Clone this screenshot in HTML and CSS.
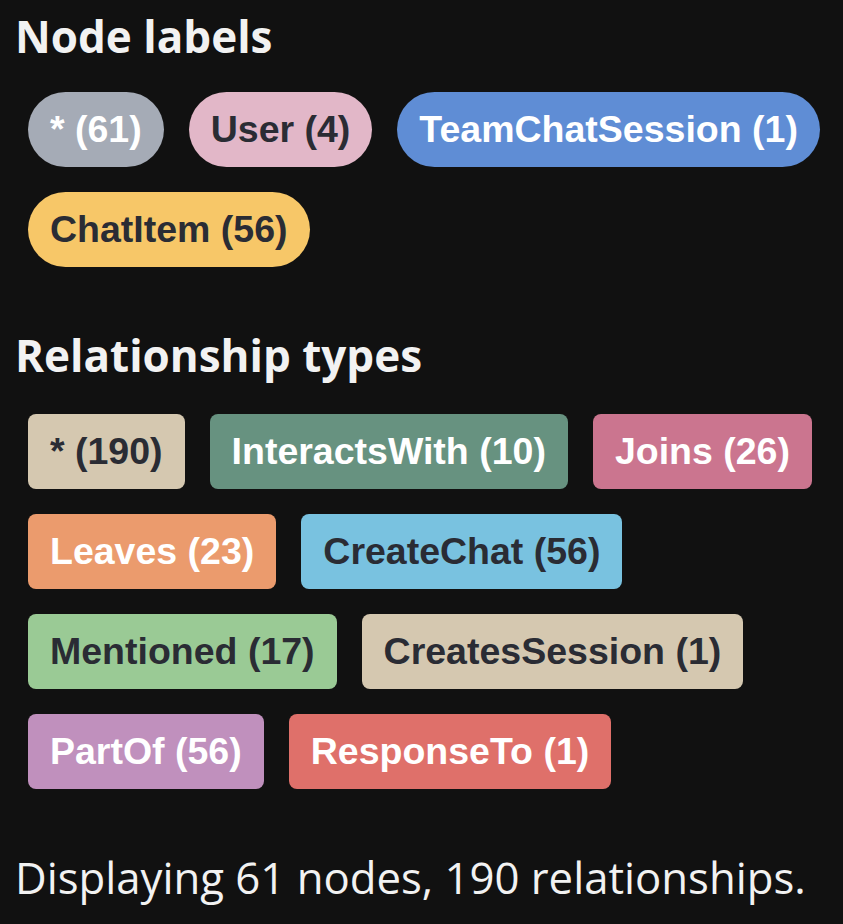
FILE: index.html
```html
<!DOCTYPE html>
<html>
<head>
<meta charset="utf-8">
<link rel="stylesheet" href="styles.css">
</head>
<body>
<div class="panel">
  <section class="group">
    <h2 class="title">Node labels</h2>
    <div class="tags">
      <span class="tag pill c-grey light">* (61)</span>
      <span class="tag pill c-pink">User (4)</span>
      <span class="tag pill c-blue light">TeamChatSession (1)</span>
      <span class="tag pill c-yellow">ChatItem (56)</span>
    </div>
  </section>
  <section class="group rels">
    <h2 class="title">Relationship types</h2>
    <div class="tags">
      <span class="tag box c-beige">* (190)</span>
      <span class="tag box c-teal light">InteractsWith (10)</span>
      <span class="tag box c-rose light">Joins (26)</span>
      <span class="tag box c-orange light">Leaves (23)</span>
      <span class="tag box c-sky">CreateChat (56)</span>
      <span class="tag box c-green">Mentioned (17)</span>
      <span class="tag box c-beige">CreatesSession (1)</span>
      <span class="tag box c-purple light">PartOf (56)</span>
      <span class="tag box c-red light">ResponseTo (1)</span>
    </div>
  </section>
  <p class="status">Displaying 61 nodes, 190 relationships.</p>
</div>
</body>
</html>
```
FILE: styles.css
```css
html, body {
  margin: 0;
  padding: 0;
  background: #111111;
}
.panel {
  padding: 6px 0 0 15px;
  font-family: "Open Sans", sans-serif;
  color: #f2f2f2;
}
.title {
  margin: 0;
  font-size: 44px;
  font-weight: 700;
  line-height: 60px;
}
.tags {
  display: flex;
  flex-wrap: wrap;
  gap: 25px;
  padding: 26px 0 0 13px;
}
.tag {
  display: inline-flex;
  align-items: center;
  height: 75px;
  padding: 0 22px;
  font-family: "Liberation Sans", Arial, sans-serif;
  font-weight: 700;
  font-size: 37.5px;
  color: #2a2c34;
  box-sizing: border-box;
}
.tag.light { color: #ffffff; }
.pill { border-radius: 38px; }
.box { border-radius: 8px; }
.rels { margin-top: 58px; }
.rels .tags { padding-top: 29px; }
.c-grey { background: #a5abb6; }
.c-pink { background: #e2b7c8; }
.c-blue { background: #5f8dd5; }
.c-yellow { background: #f7c768; }
.c-beige { background: #d5c8b0; }
.c-teal { background: #679280; }
.c-rose { background: #cb758f; }
.c-orange { background: #eb9b6d; }
.c-sky { background: #79c2e0; }
.c-green { background: #9aca95; }
.c-purple { background: #c090bd; }
.c-red { background: #df706a; }
.status {
  margin: 58px 0 0 0;
  font-size: 43.7px;
  font-weight: 400;
  line-height: 60px;
}
```
